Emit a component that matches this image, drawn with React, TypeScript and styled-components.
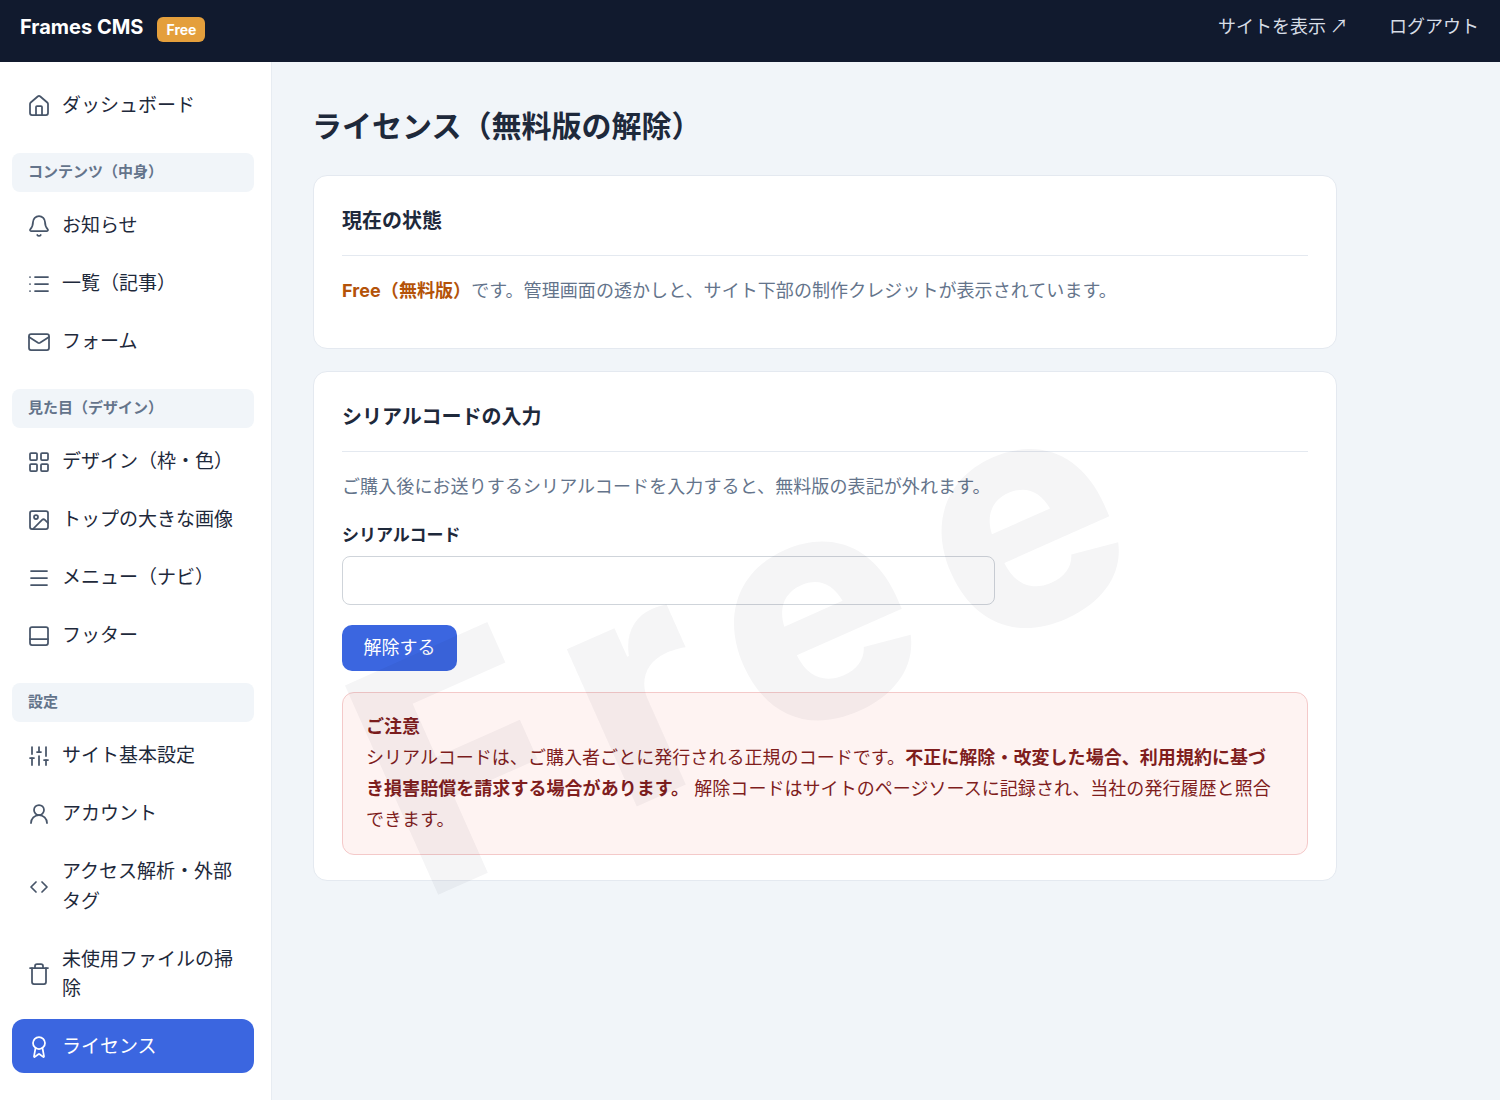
import { createGlobalStyle } from "styled-components";
import styled from "styled-components";
import {
  Award,
  Bell,
  ChevronsLeftRight,
  House,
  Image,
  LayoutGrid,
  List,
  Mail,
  Menu,
  PanelBottom,
  SlidersVertical,
  Trash,
  UserRound,
  type LucideIcon,
} from "lucide-react";

type NavEntry = { label: string; icon: LucideIcon; active?: boolean };
type NavGroup = { title?: string; items: NavEntry[] };

const navGroups: NavGroup[] = [
  { items: [{ label: "ダッシュボード", icon: House }] },
  {
    title: "コンテンツ（中身）",
    items: [
      { label: "お知らせ", icon: Bell },
      { label: "一覧（記事）", icon: List },
      { label: "フォーム", icon: Mail },
    ],
  },
  {
    title: "見た目（デザイン）",
    items: [
      { label: "デザイン（枠・色）", icon: LayoutGrid },
      { label: "トップの大きな画像", icon: Image },
      { label: "メニュー（ナビ）", icon: Menu },
      { label: "フッター", icon: PanelBottom },
    ],
  },
  {
    title: "設定",
    items: [
      { label: "サイト基本設定", icon: SlidersVertical },
      { label: "アカウント", icon: UserRound },
      { label: "アクセス解析・外部タグ", icon: ChevronsLeftRight },
      { label: "未使用ファイルの掃除", icon: Trash },
      { label: "ライセンス", icon: Award, active: true },
    ],
  },
];

const App = () => (
  <Page>
    <GlobalStyle />
    <TopBar>
      <Brand>
        <BrandName>Frames CMS</BrandName>
        <PlanBadge>Free</PlanBadge>
      </Brand>
      <TopLinks>
        <TopLink href="#">サイトを表示 ↗</TopLink>
        <TopLink href="#">ログアウト</TopLink>
      </TopLinks>
    </TopBar>
    <Body>
      <Sidebar>
        {navGroups.map((group, i) => (
          <Group key={i}>
            {group.title && <GroupTitle>{group.title}</GroupTitle>}
            <GroupItems>
              {group.items.map(({ label, icon: Icon, active }) => (
                <NavItem key={label} href="#" $active={active}>
                  <Icon size={24} strokeWidth={1.75} />
                  <span>{label}</span>
                </NavItem>
              ))}
            </GroupItems>
          </Group>
        ))}
      </Sidebar>
      <Main>
        <Title>ライセンス（無料版の解除）</Title>
        <Card>
          <CardTitle>現在の状態</CardTitle>
          <StatusText>
            <FreeLabel>Free（無料版）</FreeLabel>です。管理画面の透かしと、サイト下部の制作クレジットが表示されています。
          </StatusText>
        </Card>
        <Card>
          <CardTitle>シリアルコードの入力</CardTitle>
          <IntroText>
            ご購入後にお送りするシリアルコードを入力すると、無料版の表記が外れます。
          </IntroText>
          <FieldLabel htmlFor="serial">シリアルコード</FieldLabel>
          <SerialInput id="serial" type="text" />
          <SubmitButton type="button">解除する</SubmitButton>
          <Notice>
            <strong>ご注意</strong>
            <br />
            シリアルコードは、ご購入者ごとに発行される正規のコードです。
            <strong>不正に解除・改変した場合、利用規約に基づき損害賠償を請求する場合があります。</strong>{" "}
            解除コードはサイトのページソースに記録され、当社の発行履歴と照合できます。
          </Notice>
        </Card>
      </Main>
    </Body>
    <Watermark>Free</Watermark>
  </Page>
);

const GlobalStyle = createGlobalStyle`
  html, body {
    margin: 0;
    padding: 0;
    background: #f1f5f9;
  }
  body {
    font-family: Inter, "Noto Sans CJK JP", sans-serif;
    color: #1e293b;
  }
  * {
    box-sizing: border-box;
  }
`;

const Page = styled.div`
  position: relative;
  height: 1100px;
  overflow: hidden;
  display: flex;
  flex-direction: column;
`;

const TopBar = styled.header`
  height: 62px;
  flex-shrink: 0;
  padding: 0 21px 8px 20px;
  background: #111a2e;
  display: flex;
  align-items: center;
  justify-content: space-between;
`;

const Brand = styled.div`
  display: flex;
  align-items: center;
  gap: 14px;
`;

const BrandName = styled.span`
  font-size: 20px;
  font-weight: 700;
  color: #fff;
`;

const PlanBadge = styled.span`
  margin-top: 4px;
  padding: 3px 9px;
  border-radius: 6px;
  background: #e49f3c;
  color: #fff;
  font-size: 14px;
  font-weight: 700;
  line-height: 19px;
`;

const TopLinks = styled.nav`
  display: flex;
  gap: 41px;
  margin-top: -4px;
`;

const TopLink = styled.a`
  color: #d7dde6;
  font-family: "Noto Sans CJK JP", sans-serif;
  font-size: 18px;
  text-decoration: none;
`;

const Body = styled.div`
  flex: 1;
  display: flex;
  min-height: 0;
`;

const Sidebar = styled.aside`
  width: 272px;
  flex-shrink: 0;
  padding: 16px 17px 0 12px;
  background: #fff;
  border-right: 1px solid #e7ecf2;
  display: flex;
  flex-direction: column;
  gap: 21px;
`;

const Group = styled.div`
  display: flex;
  flex-direction: column;
  gap: 6px;
`;

const GroupTitle = styled.div`
  height: 39px;
  padding: 0 16px 5px;
  border-radius: 8px;
  background: #f1f5f9;
  color: #64748b;
  font-size: 15px;
  font-weight: 700;
  display: flex;
  align-items: center;
`;

const GroupItems = styled.div`
  display: flex;
  flex-direction: column;
  gap: 4px;
`;

const NavItem = styled.a<{ $active?: boolean }>`
  min-height: 54px;
  padding: 13px 16px 11px 15px;
  border-radius: 12px;
  display: flex;
  align-items: center;
  gap: 11px;
  font-size: 19px;
  line-height: 29.75px;
  text-decoration: none;
  color: ${(p) => (p.$active ? "#fff" : "#1e293b")};
  background: ${(p) => (p.$active ? "#3b66e0" : "transparent")};

  svg {
    flex-shrink: 0;
    color: ${(p) => (p.$active ? "#fff" : "#475569")};
  }
`;

const Main = styled.main`
  flex: 1;
  padding: 42px 41px 0;
  display: flex;
  flex-direction: column;
  align-items: flex-start;
  gap: 22px;
`;

const Title = styled.h1`
  margin: 0 0 5px -1px;
  font-size: 30px;
  line-height: 44px;
  font-weight: 700;
  color: #1e293b;
`;

const Card = styled.section`
  width: 1024px;
  padding: 30px 28px 25px;
  background: #fff;
  border: 1px solid #e4e9f0;
  border-radius: 14px;
`;

const CardTitle = styled.h2`
  margin: 0 0 20px;
  padding-bottom: 19px;
  border-bottom: 1px solid #e4e9f0;
  font-size: 20px;
  line-height: 30px;
  font-weight: 700;
  color: #1e293b;
`;

const StatusText = styled.p`
  margin: 0 0 17px;
  font-size: 18px;
  line-height: 30px;
  letter-spacing: 0.07px;
  color: #64748b;
`;

const FreeLabel = styled.strong`
  color: #b45309;
  font-weight: 700;
`;

const IntroText = styled.p`
  margin: 0 0 20px;
  font-size: 18px;
  line-height: 30px;
  letter-spacing: 0.1px;
  color: #64748b;
`;

const FieldLabel = styled.label`
  display: block;
  margin-bottom: 8px;
  font-size: 17px;
  line-height: 26px;
  font-weight: 700;
  color: #1e293b;
`;

const SerialInput = styled.input`
  display: block;
  width: 653px;
  height: 49px;
  margin-bottom: 20px;
  border: 1px solid #cfd4da;
  border-radius: 8px;
  background: transparent;
`;

const SubmitButton = styled.button`
  display: block;
  width: 115px;
  height: 46px;
  margin-bottom: 21px;
  padding: 0 0 5px;
  border: 0;
  border-radius: 10px;
  background: #3b66e0;
  color: #fff;
  font-family: inherit;
  font-size: 18px;
`;

const Notice = styled.div`
  padding: 18px 30px 19px 23px;
  border: 1px solid #f4c9c9;
  border-radius: 12px;
  background: #fef3f2;
  color: #7f1d1d;
  font-size: 18px;
  line-height: 31px;
  letter-spacing: 0.05px;

  strong {
    font-weight: 700;
  }
`;

const Watermark = styled.div`
  position: absolute;
  left: 756px;
  top: 628px;
  transform: translate(-50%, -50%) rotate(-24deg);
  font-size: 315px;
  line-height: 1;
  font-weight: 800;
  letter-spacing: 38px;
  color: rgba(15, 23, 42, 0.045);
  pointer-events: none;
  white-space: nowrap;
`;

export default App;
